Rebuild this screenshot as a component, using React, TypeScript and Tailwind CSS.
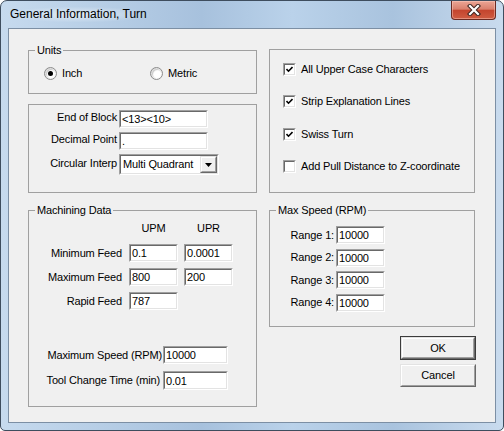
import React from 'react';

type Box = { className?: string; children?: React.ReactNode };

// classic sunken edit box
const Edit = ({ value, className = '' }: { value: string; className?: string }) => (
  <div className={`border border-t-[#a0a0a0] border-l-[#a0a0a0] border-r-white border-b-white ${className}`}>
    <div className="h-full flex items-center border border-t-[#696969] border-l-[#696969] border-r-[#e3e3e3] border-b-[#e3e3e3] bg-white pl-[1px] leading-[14px] whitespace-nowrap overflow-hidden">
      {value}
    </div>
  </div>
);

const Raised = ({ className = '', children }: Box) => (
  <div className={`border border-t-[#e3e3e3] border-l-[#e3e3e3] border-r-[#696969] border-b-[#696969] ${className}`}>
    <div className="w-full h-full flex items-center justify-center border border-t-white border-l-white border-r-[#a0a0a0] border-b-[#a0a0a0] bg-[#f0f0f0]">
      {children}
    </div>
  </div>
);

const Radio = ({ checked, label }: { checked?: boolean; label: string }) => (
  <div className="flex items-center h-[13px]">
    <div className="w-[13px] h-[13px] rounded-full border border-[#8c8c8c] bg-[linear-gradient(135deg,#d4d4d4,#ffffff)] flex items-center justify-center">
      <div className="w-[9px] h-[9px] rounded-full bg-white shadow-[inset_1px_1px_1px_#c8c8c8] flex items-center justify-center">
        {checked && <div className="w-[5px] h-[5px] rounded-full bg-black" />}
      </div>
    </div>
    <span className="ml-[5px]">{label}</span>
  </div>
);

const Check = ({ checked, label }: { checked?: boolean; label: string }) => (
  <div className="flex items-center h-[13px]">
    <div className="w-[13px] h-[13px] border border-t-[#a0a0a0] border-l-[#a0a0a0] border-r-white border-b-white">
      <div className="w-full h-full border border-t-[#696969] border-l-[#696969] border-r-[#e3e3e3] border-b-[#e3e3e3] bg-white flex items-center justify-center">
        {checked && (
          <svg width="7" height="7" viewBox="0 0 7 7">
            <path d="M0.5 3 L2.5 5.2 L6.5 1" fill="none" stroke="#000" strokeWidth="1.6" />
          </svg>
        )}
      </div>
    </div>
    <span className="ml-[5px]">{label}</span>
  </div>
);

const Group = ({ label, className = '', children }: Box & { label?: string }) => (
  <fieldset className={`border border-[#a0a0a0] ${className}`}>
    {label && <legend className="ml-[6px] px-[2px] leading-[13px]">{label}</legend>}
    {children}
  </fieldset>
);

const CloseButton = () => (
  <div className="w-[45px] h-[19px] mr-[7px] ml-auto rounded-b-[4px] border border-t-0 border-[#6b2a22] bg-[linear-gradient(180deg,#eba595_0%,#d9806d_45%,#c4452e_52%,#cf5c42_100%)] flex items-center justify-center shadow-[inset_0_0_0_1px_rgba(255,210,200,0.45)]">
    <svg width="14" height="12" viewBox="0 0 14 12">
      <path d="M3 2 L11 10 M11 2 L3 10" stroke="#3d2420" strokeWidth="4.2" strokeLinecap="square" />
      <path d="M3 2 L11 10 M11 2 L3 10" stroke="#ffffff" strokeWidth="2.2" strokeLinecap="square" />
    </svg>
  </div>
);

export default function App() {
  return (
    <div className="w-[504px] h-[431px] bg-white">
      <div className="w-[504px] h-[431px] rounded-t-[7px] rounded-b-[5px] border border-[#3e4d5e] bg-[linear-gradient(90deg,#c6daee_0%,#b3cbe4_25%,#a7c1dd_40%,#bad2ea_58%,#a9c3de_78%,#c9dbee_100%)] flex flex-col font-['Liberation_Sans',Arial,sans-serif]">
        {/* title bar */}
        <div className="h-[27px] shrink-0 flex items-start">
          <div className="ml-[7px] mt-[6px] px-[2px] -mx-[2px] text-[12px] leading-[15px] text-black rounded-full bg-[radial-gradient(ellipse_at_center,rgba(255,255,255,0.55),rgba(255,255,255,0)_75%)]">
            General Information, Turn
          </div>
          <CloseButton />
        </div>

        {/* client area */}
        <div className="mx-[7px] h-[395px] shrink-0 border border-[#7c8fa4] bg-[#f0f0f0] flex text-[11px] tracking-[-0.15px] text-black">
          {/* left column */}
          <div className="ml-[19px] w-[229px] flex flex-col">
            <Group label="Units" className="mt-[15px] h-[50px]">
              <div className="mt-[10px] pl-[15px] flex">
                <div className="w-[106px]">
                  <Radio checked label="Inch" />
                </div>
                <Radio label="Metric" />
              </div>
            </Group>

            <Group className="mt-[10px] h-[89px]">
              <div className="pt-[5px] flex flex-col gap-[4px]">
                <div className="flex items-center">
                  <span className="w-[88px] text-right -mt-[3px]">End of Block</span>
                  <Edit value="<13><10>" className="ml-[2px] w-[89px] h-[18px]" />
                </div>
                <div className="flex items-center">
                  <span className="w-[88px] text-right -mt-[3px]">Decimal Point</span>
                  <Edit value="." className="ml-[2px] w-[89px] h-[18px]" />
                </div>
                <div className="flex items-center">
                  <span className="w-[88px] text-right -mt-[3px]">Circular Interp</span>
                  <div className="ml-[2px] w-[100px] h-[21px] border border-t-[#a0a0a0] border-l-[#a0a0a0] border-r-white border-b-white">
                    <div className="h-full flex items-center border border-t-[#696969] border-l-[#696969] border-r-[#e3e3e3] border-b-[#e3e3e3] bg-white">
                      <span className="pl-[2px] flex-1 whitespace-nowrap">Multi Quadrant</span>
                      <Raised className="w-[17px] h-[17px]">
                        <svg width="7" height="4" viewBox="0 0 7 4">
                          <path d="M0 0 H7 L3.5 4 Z" fill="#000" />
                        </svg>
                      </Raised>
                    </div>
                  </div>
                </div>
              </div>
            </Group>

            <Group label="Machining Data" className="mt-[11px] h-[203px]">
              <div className="mt-[5px] flex leading-[13px]">
                <span className="ml-[100px] w-[49px] text-center">UPM</span>
                <span className="ml-[6px] w-[49px] text-center">UPR</span>
              </div>
              <div className="mt-[9px] flex flex-col gap-[6px]">
                <div className="flex items-center">
                  <span className="w-[93px] text-right">Minimum Feed</span>
                  <Edit value="0.1" className="ml-[7px] w-[49px] h-[18px]" />
                  <Edit value="0.0001" className="ml-[6px] w-[49px] h-[18px]" />
                </div>
                <div className="flex items-center">
                  <span className="w-[93px] text-right">Maximum Feed</span>
                  <Edit value="800" className="ml-[7px] w-[49px] h-[18px]" />
                  <Edit value="200" className="ml-[6px] w-[49px] h-[18px]" />
                </div>
                <div className="flex items-center">
                  <span className="w-[93px] text-right">Rapid Feed</span>
                  <Edit value="787" className="ml-[7px] w-[49px] h-[18px]" />
                </div>
              </div>
              <div className="mt-[36px] flex flex-col gap-[7px]">
                <div className="flex items-center">
                  <span className="w-[133px] text-right">Maximum Speed (RPM)</span>
                  <Edit value="10000" className="ml-[1px] w-[65px] h-[18px]" />
                </div>
                <div className="flex items-center">
                  <span className="w-[131px] text-right">Tool Change Time (min)</span>
                  <Edit value="0.01" className="ml-[3px] w-[65px] h-[19px]" />
                </div>
              </div>
            </Group>
          </div>

          {/* right column */}
          <div className="ml-[12px] w-[207px] flex flex-col">
            <Group className="mt-[20px] h-[144px] w-[206px]">
              <div className="pt-[12.5px] pl-[13px] flex flex-col gap-[19.5px]">
                <Check checked label="All Upper Case Characters" />
                <Check checked label="Strip Explanation Lines" />
                <Check checked label="Swiss Turn" />
                <Check label="Add Pull Distance to Z-coordinate" />
              </div>
            </Group>

            <Group label="Max Speed (RPM)" className="mt-[11px] h-[123px] w-[206px]">
              <div className="mt-[9px] flex flex-col gap-[4.5px]">
                {['1', '2', '3', '4'].map((n) => (
                  <div key={n} className="flex items-center">
                    <span className="w-[64px] text-right">Range {n}:</span>
                    <Edit value="10000" className="ml-[2px] w-[49px] h-[18px]" />
                  </div>
                ))}
              </div>
            </Group>

            <div className="mt-[9px] self-end border border-[#3c3c3c]">
              <Raised className="w-[74px] h-[22px]">OK</Raised>
            </div>
            <Raised className="mt-[4px] self-end w-[76px] h-[23px]">Cancel</Raised>
          </div>
        </div>
      </div>
    </div>
  );
}
